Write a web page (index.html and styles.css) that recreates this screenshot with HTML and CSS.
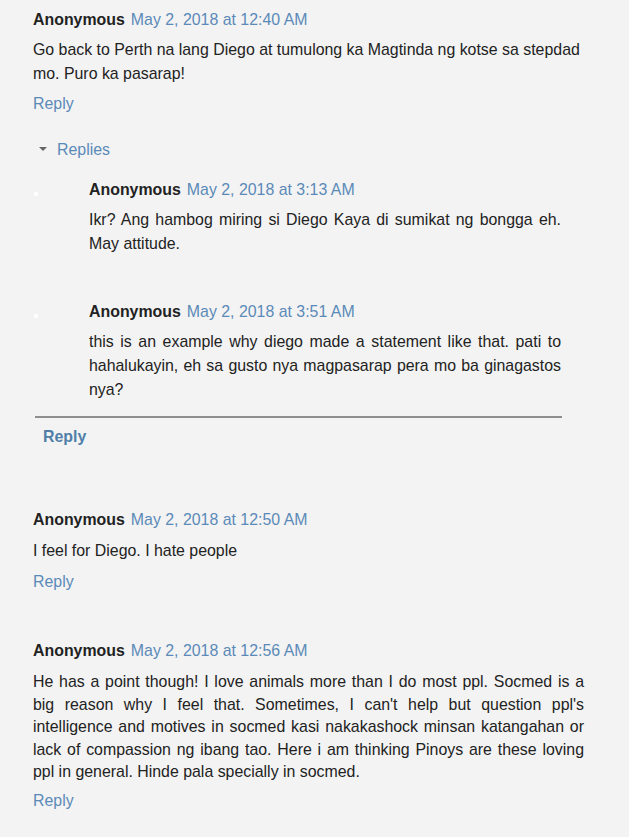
FILE: index.html
```html
<!DOCTYPE html>
<html>
<head>
<meta charset="utf-8">
<link rel="stylesheet" href="styles.css">
</head>
<body>
<div class="comments">
  <div class="comment first">
    <div class="head"><span class="user">Anonymous</span><a class="date">May 2, 2018 at 12:40 AM</a></div>
    <p class="body left">Go back to Perth na lang Diego at tumulong ka Magtinda ng kotse sa stepdad mo. Puro ka pasarap!</p>
    <a class="reply">Reply</a>
  </div>
  <div class="thread">
    <div class="toggle"><span class="arrow"></span><a>Replies</a></div>
    <div class="nested">
      <div class="dot"></div>
      <div class="head"><span class="user">Anonymous</span><a class="date">May 2, 2018 at 3:13 AM</a></div>
      <p class="body">Ikr? Ang hambog miring si Diego Kaya di sumikat ng bongga eh. May attitude.</p>
    </div>
    <div class="nested second">
      <div class="dot"></div>
      <div class="head"><span class="user">Anonymous</span><a class="date">May 2, 2018 at 3:51 AM</a></div>
      <p class="body">this is an example why diego made a statement like that. pati to hahalukayin, eh sa gusto nya magpasarap pera mo ba ginagastos nya?</p>
    </div>
    <div class="rule"></div>
    <a class="reply bold">Reply</a>
  </div>
  <div class="comment c2">
    <div class="head"><span class="user">Anonymous</span><a class="date">May 2, 2018 at 12:50 AM</a></div>
    <p class="body">I feel for Diego. I hate people</p>
    <a class="reply">Reply</a>
  </div>
  <div class="comment c3">
    <div class="head"><span class="user">Anonymous</span><a class="date">May 2, 2018 at 12:56 AM</a></div>
    <p class="body">He has a point though! I love animals more than I do most ppl. Socmed is a big reason why I feel that. Sometimes, I can't help but question ppl's intelligence and motives in socmed kasi nakakashock minsan katangahan or lack of compassion ng ibang tao. Here i am thinking Pinoys are these loving ppl in general. Hinde pala specially in socmed.</p>
    <a class="reply">Reply</a>
  </div>
</div>
</body>
</html>
```
FILE: styles.css
```css
html, body {
  margin: 0;
  padding: 0;
  background: #f3f3f3;
}
body {
  font-family: "Liberation Sans", Arial, sans-serif;
  font-size: 15.9px;
  color: #222;
  line-height: 24px;
}
.comments {
  padding: 8px 45px 0 33px;
}
a {
  color: #5b8ab8;
  text-decoration: none;
  display: inline-block;
}
.head {
  display: flex;
  gap: 6px;
  align-items: baseline;
}
.user {
  font-weight: bold;
  color: #222;
}
.body {
  margin: 6px 0 6px 0;
  text-align: justify;
}
.body.left {
  text-align: left;
}
.reply {
  color: #5b8ab8;
}
.thread {
  margin-top: 22px;
}
.toggle {
  display: flex;
  align-items: center;
  padding-left: 6px;
  gap: 10px;
}
.arrow {
  width: 0;
  height: 0;
  border-left: 4px solid transparent;
  border-right: 4px solid transparent;
  border-top: 4px solid #666;
  margin-top: -2px;
}
.nested {
  position: relative;
  margin-left: 56px;
  margin-right: 23px;
  margin-top: 16px;
}
.nested.second {
  margin-top: 44px;
}
.dot {
  position: absolute;
  left: -55px;
  top: 14px;
  width: 4px;
  height: 4px;
  background: #fff;
  border-radius: 1px;
}
.rule {
  height: 2px;
  background: #8e8e8e;
  margin: 14px 22px 0 2px;
}
.reply.bold {
  font-weight: bold;
  margin-left: 10px;
  margin-top: 7px;
  color: #4f7fa8;
}
.comment.c2 {
  margin-top: 59px;
}
.comment.c2 .body {
  margin: 7px 0 7px 0;
}
.comment.c3 {
  margin-top: 45px;
}
.comment.c3 .body {
  line-height: 22.5px;
  margin: 8px 0 5px 0;
}
```
